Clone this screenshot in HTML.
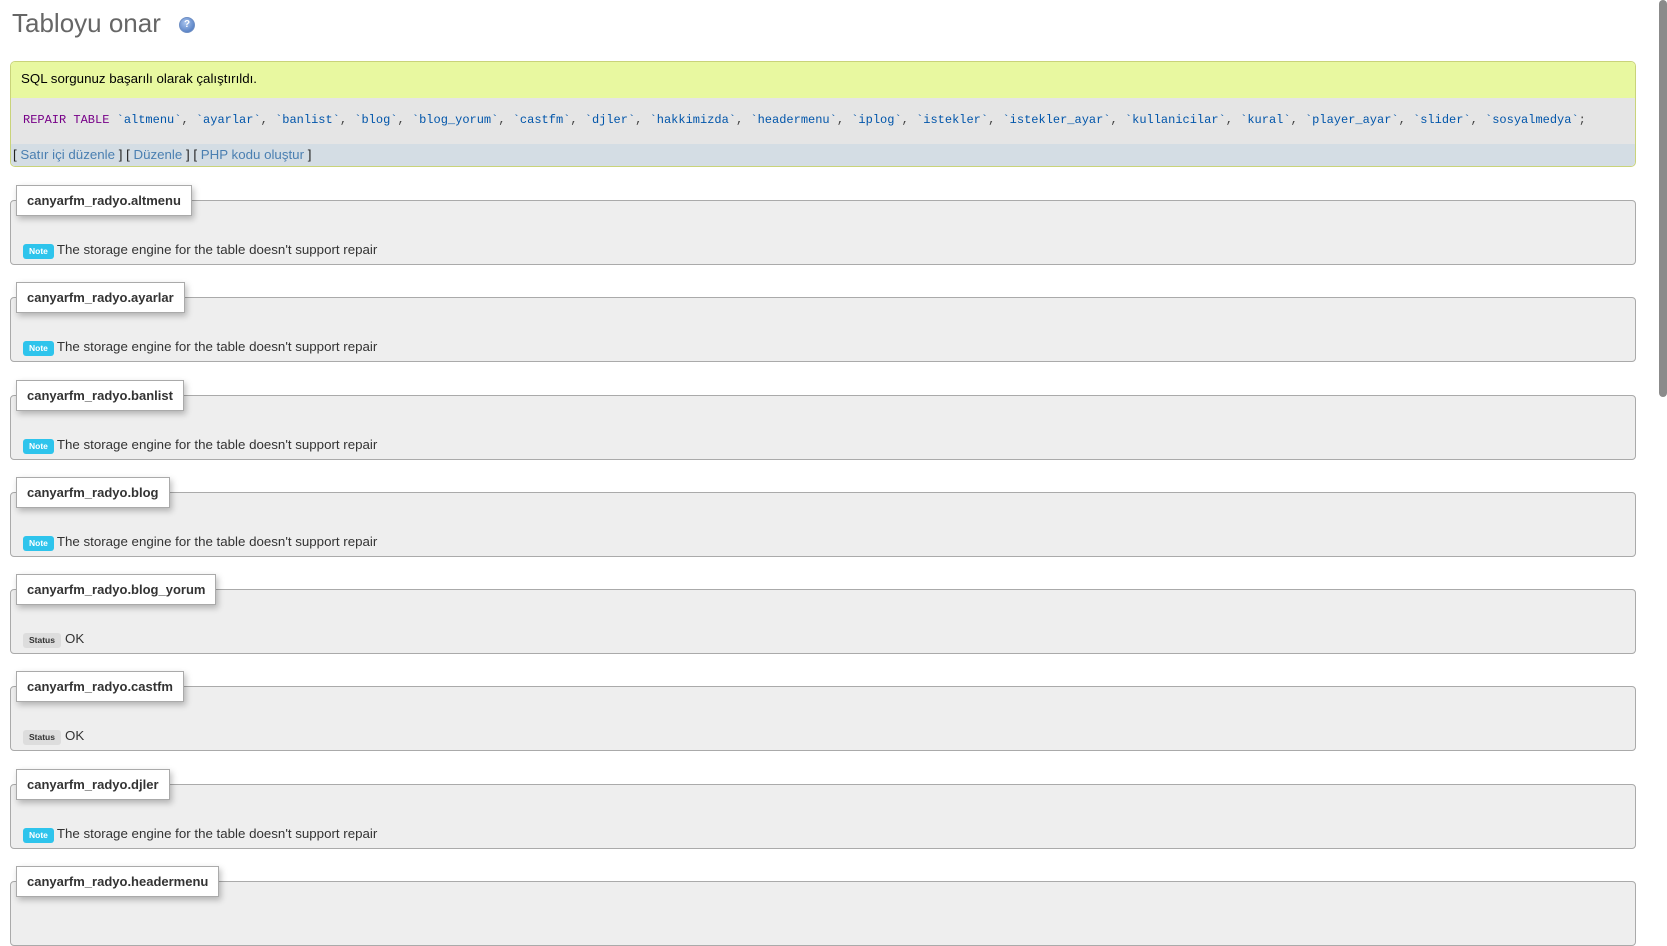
<!DOCTYPE html>
<html><head><meta charset="utf-8"><style>
html,body{margin:0;padding:0;background:#fff;width:1667px;height:859px;overflow:hidden;font-family:"Liberation Sans",Arial,sans-serif;}
.title{position:absolute;left:12px;top:7px;font-size:26px;color:#666;line-height:32px;}
.help{position:absolute;left:179px;top:17px;width:14px;height:14px;border-radius:50%;background:radial-gradient(circle at 40% 35%,#a9c4ee,#3f6db8);border:1px solid #6f8fc4;color:#fff;font-size:10px;font-weight:bold;text-align:center;line-height:14px;}
.box{position:absolute;left:10px;top:61px;width:1626px;height:106px;border:1px solid #c9d37a;border-radius:5px;overflow:hidden;box-sizing:border-box;}
.ok{height:36px;background:#e8f8a0;font-size:13.3px;color:#000;padding-left:10px;line-height:34px;}
.code{height:46px;background:#e5e5e5;font-family:"Liberation Mono",monospace;font-size:12px;line-height:44px;padding-left:12px;color:#444;white-space:pre;}
.kw{color:#770088}.nm{color:#0055aa}
.links{height:24px;background:#d4dde4;font-size:13.3px;line-height:22px;padding-left:2px;color:#222;}
.links a{color:#4a7fb1;text-decoration:none}
.fs{position:absolute;left:10px;width:1626px;height:65px;box-sizing:border-box;border:1px solid #aaa;border-radius:4px;background:#eee;}
.lg{position:absolute;left:5px;top:-16px;background:#fff;border:1px solid #aaa;box-shadow:2px 3px 6px rgba(0,0,0,.25);font-weight:bold;font-size:13px;color:#333;padding:0 10px;height:31px;line-height:30px;box-sizing:border-box;}
.msg{position:absolute;left:12px;top:40px;font-size:13.3px;color:#333;line-height:17px;}
.note{display:inline-block;background:#2ec4ec;color:#fff;font-size:8.5px;font-weight:bold;border-radius:3px;padding:0 6px;height:15px;line-height:15px;vertical-align:0px;margin-right:3px;}
.st{display:inline-block;background:#ddd;color:#333;font-size:8.5px;font-weight:bold;border-radius:3px;padding:0 6px;height:15px;line-height:15px;vertical-align:0px;margin-right:4px;}
.sb{position:absolute;left:1659px;top:0;width:8px;height:397px;background:#8b8b8b;border-radius:4px;}
</style></head><body>
<div class="title">Tabloyu onar</div>
<div class="help">?</div>
<div class="box">
<div class="ok">SQL sorgunuz başarılı olarak çalıştırıldı.</div>
<div class="code"><span class="kw">REPAIR TABLE</span> <span class="nm">`altmenu`</span>, <span class="nm">`ayarlar`</span>, <span class="nm">`banlist`</span>, <span class="nm">`blog`</span>, <span class="nm">`blog_yorum`</span>, <span class="nm">`castfm`</span>, <span class="nm">`djler`</span>, <span class="nm">`hakkimizda`</span>, <span class="nm">`headermenu`</span>, <span class="nm">`iplog`</span>, <span class="nm">`istekler`</span>, <span class="nm">`istekler_ayar`</span>, <span class="nm">`kullanicilar`</span>, <span class="nm">`kural`</span>, <span class="nm">`player_ayar`</span>, <span class="nm">`slider`</span>, <span class="nm">`sosyalmedya`</span>;</div>
<div class="links">[ <a>Satır içi düzenle</a> ] [ <a>Düzenle</a> ] [ <a>PHP kodu oluştur</a> ]</div>
</div>

<div class="fs" style="top:200px"><div class="lg">canyarfm_radyo.altmenu</div><div class="msg"><span class="note">Note</span>The storage engine for the table doesn't support repair</div></div>
<div class="fs" style="top:297px"><div class="lg">canyarfm_radyo.ayarlar</div><div class="msg"><span class="note">Note</span>The storage engine for the table doesn't support repair</div></div>
<div class="fs" style="top:395px"><div class="lg">canyarfm_radyo.banlist</div><div class="msg"><span class="note">Note</span>The storage engine for the table doesn't support repair</div></div>
<div class="fs" style="top:492px"><div class="lg">canyarfm_radyo.blog</div><div class="msg"><span class="note">Note</span>The storage engine for the table doesn't support repair</div></div>
<div class="fs" style="top:589px"><div class="lg">canyarfm_radyo.blog_yorum</div><div class="msg"><span class="st">Status</span>OK</div></div>
<div class="fs" style="top:686px"><div class="lg">canyarfm_radyo.castfm</div><div class="msg"><span class="st">Status</span>OK</div></div>
<div class="fs" style="top:784px"><div class="lg">canyarfm_radyo.djler</div><div class="msg"><span class="note">Note</span>The storage engine for the table doesn't support repair</div></div>
<div class="fs" style="top:881px"><div class="lg">canyarfm_radyo.headermenu</div></div>
<div class="sb"></div>
</body></html>
